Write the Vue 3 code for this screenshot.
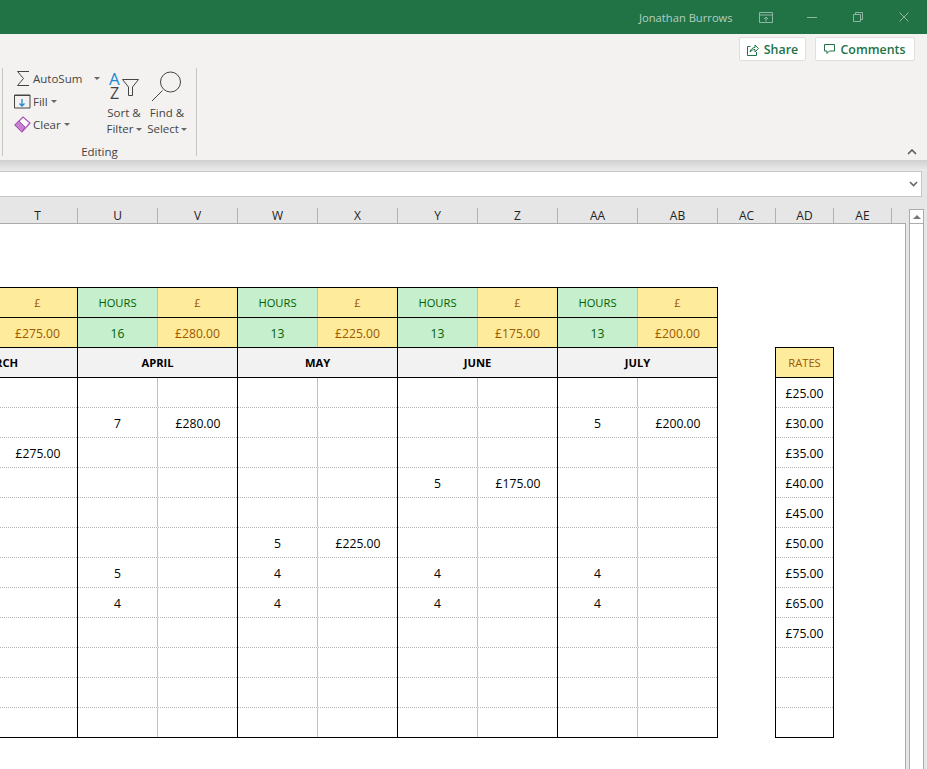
<template>
  <div class="window">
    <header class="titlebar">
      <span class="user">Jonathan Burrows</span>
      <svg class="win-icon ribbon-opts" width="14" height="11" viewBox="0 0 14 11">
        <path d="M.5.5h13v10H.5zM.5 3h13M7 9.500V5M5 7l2-2 2 2" />
      </svg>
      <svg class="win-icon minimize" width="10" height="10" viewBox="0 0 10 10"><path d="M0 5.500h10" /></svg>
      <svg class="win-icon restore" width="10" height="10" viewBox="0 0 10 10">
        <path d="M.5 2.500h7v7h-7zM2.500 2.500v-2h7v7h-2" />
      </svg>
      <svg class="win-icon close" width="10" height="10" viewBox="0 0 10 10"><path d="M.5.500l9 9M9.500.500l-9 9" /></svg>
    </header>

    <section class="ribbon">
      <div class="share-row">
        <button class="pill share">
          <svg width="12" height="13" viewBox="0 0 12 13">
            <path d="M3.500 3.500H.5v9h9V9M3 9C3.500 6 6 4.500 8 4.500V2l3.500 3.500L8 9V6.500C6 6.500 4.500 7.500 3 9z" />
          </svg>
          Share
        </button>
        <button class="pill comments">
          <svg width="11" height="10" viewBox="0 0 11 10">
            <path d="M.5.500h10v6.500H5.500L3 9.500V7H.5z" />
          </svg>
          Comments
        </button>
      </div>

      <div class="group">
        <div class="group-body">
          <div class="small-col">
            <div class="small-btn autosum">
              <svg width="14" height="17" viewBox="0 0 14 17"><path d="M13 1.500H1.500L7.500 8.500 1.500 15.500H13" /></svg>
              <span>AutoSum</span>
              <i class="caret caret-far"></i>
            </div>
            <div class="small-btn fill">
              <svg width="17" height="15" viewBox="0 0 17 15">
                <path class="dark" d="M.5 14V1h15.500v13zM.5 1.500h15.500" />
                <path class="blue" d="M8 5v7M5.500 9.500L8 12l2.500-2.500" />
              </svg>
              <span>Fill</span>
              <i class="caret"></i>
            </div>
            <div class="small-btn clear">
              <svg width="17" height="17" viewBox="0 0 17 17">
                <path class="eraser" d="M1 9l8-8 7 6-8 9z" />
                <path class="eraser-fill" d="M1 9l4-4 6 6-3 5z" />
              </svg>
              <span>Clear</span>
              <i class="caret"></i>
            </div>
          </div>

          <div class="big-btn sort">
            <svg width="34" height="31" viewBox="0 0 34 31">
              <text x="2" y="15" class="az-a">A</text>
              <text x="3" y="29" class="az-z">Z</text>
              <path class="dark" d="M15.500 9.500h16l-6 7.500v8.500h-4V17z" />
            </svg>
            <span>Sort &amp;</span>
            <span>Filter<i class="caret"></i></span>
          </div>

          <div class="big-btn find">
            <svg width="32" height="31" viewBox="0 0 32 31">
              <circle class="dark" cx="19.500" cy="12" r="10" />
              <path class="dark" d="M11.500 20.500L1 31" />
            </svg>
            <span>Find &amp;</span>
            <span>Select<i class="caret"></i></span>
          </div>
        </div>
        <div class="group-label">Editing</div>
      </div>

      <svg class="collapse" width="10" height="6" viewBox="0 0 10 6"><path d="M1 5l4-4 4 4" /></svg>
    </section>

    <div class="ribbon-shadow"></div>

    <div class="formula-row">
      <div class="formula-input"></div>
      <svg class="formula-chevron" width="9" height="6" viewBox="0 0 9 6"><path d="M1 1l3.500 3.500L8 1" /></svg>
    </div>

    <div class="sheet-area">
      <div class="sheet-main">
        <div class="col-headers">
          <div v-for="col in colHeaders" :key="col.name" class="col-head" :style="{ width: col.width + 'px' }">
            {{ col.name }}
          </div>
        </div>

        <div class="sheet">
          <div class="table">
            <div v-for="m in months" :key="m.name" class="month">
              <div class="summary-row">
                <div class="cell good split">{{ m.hours ? 'HOURS' : '' }}</div>
                <div class="cell neutral">£</div>
              </div>
              <div class="summary-row">
                <div class="cell good split value">{{ m.hours }}</div>
                <div class="cell neutral value">{{ m.total }}</div>
              </div>
              <div class="month-name">{{ m.name }}</div>
              <div v-for="(row, i) in m.rows" :key="i" class="data-row" :class="{ last: i === 11 }">
                <div class="cell split value">{{ row[0] }}</div>
                <div class="cell value">{{ row[1] }}</div>
              </div>
            </div>
          </div>

          <div class="rates">
            <div class="rates-head">RATES</div>
            <div v-for="(r, i) in rates" :key="i" class="rate" :class="{ last: i === 11 }">{{ r }}</div>
          </div>
        </div>
      </div>

      <div class="scrollbar">
        <div class="scroll-up"><i></i></div>
        <div class="scroll-track"></div>
      </div>
    </div>
  </div>
</template>

<script setup>
const colHeaders = [
  { name: 'T', width: 80 },
  { name: 'U', width: 80 },
  { name: 'V', width: 80 },
  { name: 'W', width: 80 },
  { name: 'X', width: 80 },
  { name: 'Y', width: 80 },
  { name: 'Z', width: 80 },
  { name: 'AA', width: 80 },
  { name: 'AB', width: 80 },
  { name: 'AC', width: 58 },
  { name: 'AD', width: 58 },
  { name: 'AE', width: 58 },
]

// only the filled cells, the rest of the 12 rows stay blank
function fill(entries) {
  const rows = Array.from({ length: 12 }, () => ['', ''])
  Object.keys(entries).forEach(k => { rows[k] = entries[k] })
  return rows
}

const months = [
  { name: 'MARCH', hours: '', total: '£275.00', rows: fill({ 2: ['', '£275.00'] }) },
  { name: 'APRIL', hours: '16', total: '£280.00', rows: fill({ 1: ['7', '£280.00'], 6: ['5', ''], 7: ['4', ''] }) },
  { name: 'MAY', hours: '13', total: '£225.00', rows: fill({ 5: ['5', '£225.00'], 6: ['4', ''], 7: ['4', ''] }) },
  { name: 'JUNE', hours: '13', total: '£175.00', rows: fill({ 3: ['5', '£175.00'], 6: ['4', ''], 7: ['4', ''] }) },
  { name: 'JULY', hours: '13', total: '£200.00', rows: fill({ 1: ['5', '£200.00'], 6: ['4', ''], 7: ['4', ''] }) },
]

const rates = ['£25.00', '£30.00', '£35.00', '£40.00', '£45.00', '£50.00', '£55.00', '£65.00', '£75.00', '', '', '']
</script>

<style scoped>
.window {
  width: 927px;
  height: 769px;
  overflow: hidden;
  background: #f3f2f1;
  font-family: 'Open Sans', 'Noto Sans', sans-serif;
  display: flex;
  flex-direction: column;
}

/* Title bar */
.titlebar {
  height: 34px;
  background: #217346;
  display: flex;
  align-items: center;
  flex-shrink: 0;
  color: #b3cfc0;
}
.user {
  margin-left: 639px;
  width: 94px;
  font-size: 11.200px;
  white-space: nowrap;
}
.win-icon { fill: none; stroke: #8fb8a2; stroke-width: 1; }
.ribbon-opts { margin-left: 26px; }
.minimize { margin-left: 34px; }
.restore { margin-left: 36px; }
.close { margin-left: 36px; }

/* Ribbon */
.ribbon {
  height: 126px;
  flex-shrink: 0;
  position: relative;
  color: #444;
}
.share-row {
  display: flex;
  justify-content: flex-end;
  gap: 9px;
  padding: 3px 12px 0 0;
  height: 34px;
  box-sizing: border-box;
}
.pill {
  height: 24px;
  background: #fff;
  border: 1px solid #e1dfdd;
  border-radius: 2px;
  color: #217346;
  font: 600 12.400px 'Open Sans', sans-serif;
  display: flex;
  align-items: center;
  gap: 5px;
  padding: 0;
  justify-content: center;
}
.pill svg { fill: none; stroke: #217346; stroke-width: 1; }
.share { width: 67px; }
.comments { width: 100px; }

.group {
  margin-left: 2px;
  width: 195px;
  height: 88px;
  box-sizing: border-box;
  border-left: 1px solid #c8c6c4;
  border-right: 1px solid #c8c6c4;
}
.group-body {
  height: 77px;
  display: flex;
}
.group-label {
  text-align: center;
  font-size: 11.500px;
  line-height: 14px;
  color: #444;
}
.small-col {
  width: 100px;
  margin-top: -1px;
  padding-left: 11px;
  box-sizing: border-box;
  display: flex;
  flex-direction: column;
  flex-shrink: 0;
}
.small-btn {
  height: 23px;
  display: flex;
  align-items: center;
  font-size: 11.500px;
  gap: 2px;
}
.small-btn svg { fill: none; flex-shrink: 0; }
.autosum { gap: 4px; }
.autosum svg { stroke: #444; margin-left: 2px; margin-right: -1px; }
.caret {
  display: inline-block;
  width: 0;
  height: 0;
  border-left: 3px solid transparent;
  border-right: 3px solid transparent;
  border-top: 3px solid #666;
  margin-left: 1px;
  vertical-align: middle;
}
.caret-far { margin-left: 8px; }
.dark { fill: none; stroke: #444; stroke-width: 1; }
.blue { fill: none; stroke: #1e88d2; stroke-width: 1.300; }
.eraser { fill: #fff; stroke: #a84cb8; stroke-width: 1.200; }
.eraser-fill { fill: #c880d0; stroke: #a84cb8; stroke-width: 1; }

.big-btn {
  display: flex;
  flex-direction: column;
  align-items: center;
  font-size: 11.500px;
  line-height: 16px;
  white-space: nowrap;
}
.big-btn .caret { margin-left: 2px; }
.sort { width: 42px; }
.find { width: 44px; }
.big-btn svg { margin-top: 2px; margin-bottom: 4px; flex-shrink: 0; overflow: visible; }
.az-a { font: 17px/17px 'Open Sans', sans-serif; fill: #1e88d2; }
.az-z { font: 16px/16px 'Open Sans', sans-serif; fill: #444; }

.collapse {
  position: absolute;
  right: 10px;
  bottom: 5px;
  fill: none;
  stroke: #555;
  stroke-width: 1.500;
}

.ribbon-shadow {
  height: 11px;
  flex-shrink: 0;
  background: linear-gradient(#d0d0d0, #ececec);
}

/* Formula bar */
.formula-row {
  height: 26px;
  flex-shrink: 0;
  position: relative;
  background: #e6e6e6;
}
.formula-input {
  height: 24px;
  width: 921px;
  background: #fff;
  border: 1px solid #c6c6c6;
  border-left: none;
}
.formula-chevron {
  position: absolute;
  right: 9px;
  top: 10px;
  fill: none;
  stroke: #666;
  stroke-width: 1.600;
}

/* Sheet */
.sheet-area {
  flex: 1;
  display: flex;
  background: #e6e6e6;
  min-height: 0;
}
.sheet-main {
  width: 906px;
  display: flex;
  flex-direction: column;
  flex-shrink: 0;
}
.col-headers {
  height: 27px;
  margin-left: -2px;
  display: flex;
  align-items: flex-end;
  border-bottom: 1px solid #ababab;
  box-sizing: border-box;
  flex-shrink: 0;
}
.col-head {
  height: 15px;
  box-sizing: border-box;
  border-right: 1px solid #b1b1b1;
  font: 12px/15px 'Open Sans', sans-serif;
  color: #222;
  text-align: center;
  flex-shrink: 0;
}
.sheet {
  flex: 1;
  background: #fff;
  border-right: 1px solid #ababab;
  display: flex;
  align-items: flex-start;
  padding-top: 63px;
  min-height: 0;
  overflow: hidden;
  font-size: 11.200px;
  color: #000;
}
.table {
  display: flex;
  margin-left: -82px;
  border-top: 1px solid #000;
  flex-shrink: 0;
}
.month {
  width: 160px;
  border-right: 1px solid #000;
  box-sizing: border-box;
}
.summary-row {
  display: flex;
  height: 30px;
  border-bottom: 1px solid #000;
  box-sizing: border-box;
}
.month-name {
  height: 30px;
  line-height: 29px;
  box-sizing: border-box;
  border-bottom: 1px solid #000;
  background: #f2f2f2;
  text-align: center;
  font-weight: 700;
  color: #000;
}
.data-row {
  display: flex;
  height: 30px;
  box-sizing: border-box;
  border-bottom: 1px dotted #b5b5b5;
}
.data-row.last { border-bottom: 1px solid #000; }
.cell {
  width: 80px;
  flex-shrink: 0;
  line-height: 29px;
  text-align: center;
  box-sizing: border-box;
}
.value { font-size: 12.200px; line-height: 31px; }
.split { border-right: 1px solid #bfbfbf; }
.good { background: #c6efce; color: #006100; }
.neutral { flex: 1; width: auto; background: #ffeb9c; color: #9c5700; }

.rates {
  margin-left: 57px;
  margin-top: 60px;
  width: 59px;
  border: 1px solid #000;
  box-sizing: border-box;
  flex-shrink: 0;
}
.rates-head {
  height: 30px;
  line-height: 29px;
  text-align: center;
  background: #ffeb9c;
  color: #9c5700;
  border-bottom: 1px solid #000;
  box-sizing: border-box;
}
.rate {
  height: 30px;
  line-height: 31px;
  font-size: 12.200px;
  text-align: center;
  box-sizing: border-box;
  border-bottom: 1px dotted #b5b5b5;
}
.rate.last { border-bottom: none; height: 29px; }

/* Scrollbar */
.scrollbar {
  flex: 1;
  display: flex;
  flex-direction: column;
  padding: 12px 3px 0;
}
.scroll-up {
  height: 15px;
  background: #fff;
  border: 1px solid #ababab;
  box-sizing: border-box;
  display: flex;
  align-items: center;
  justify-content: center;
}
.scroll-up i {
  width: 0;
  height: 0;
  border-left: 4px solid transparent;
  border-right: 4px solid transparent;
  border-bottom: 4px solid #777;
}
.scroll-track {
  flex: 1;
  background: #fff;
  border-left: 1px solid #ababab;
  border-right: 1px solid #ababab;
}
</style>
